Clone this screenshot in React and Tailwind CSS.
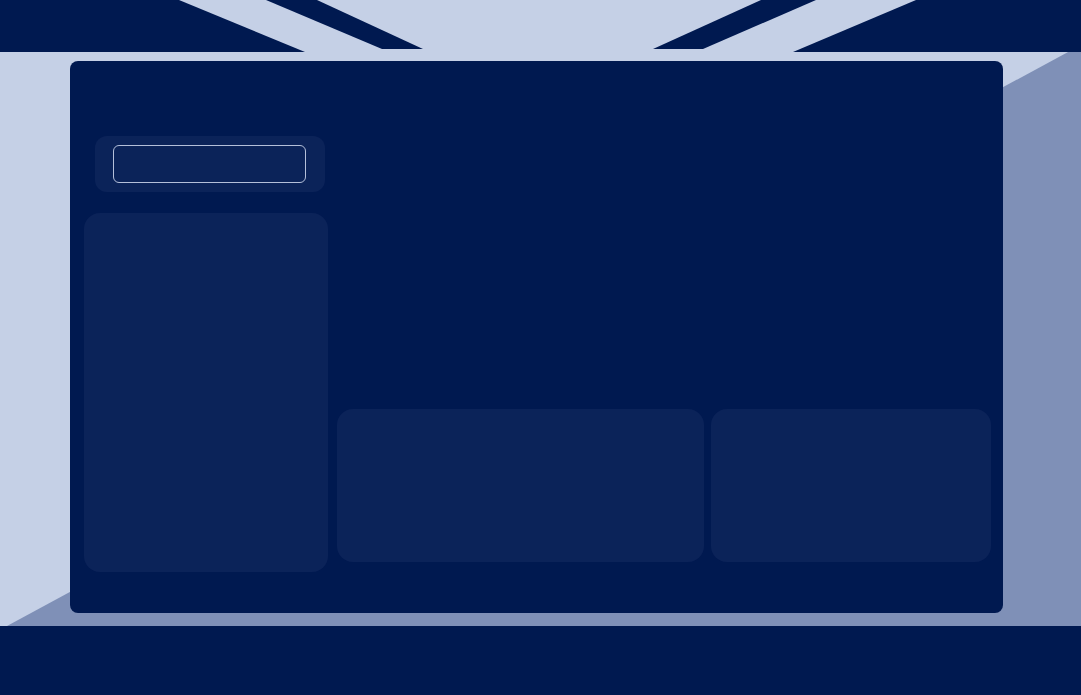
export default function App() {
    return (
        <div className="relative w-[1081px] h-[695px] overflow-hidden bg-[#c5d0e6]">
            {/* backdrop shapes */}
            <svg className="absolute inset-0" width="1081" height="695" viewBox="0 0 1081 695">
                <polygon points="1081,45 1081,626 7,626" fill="#7f90b7" />
                <polygon points="0,0 179,0 305,52 0,52" fill="#001950" />
                <polygon points="266,0 317,0 423,49 382,49" fill="#001950" />
                <polygon points="761,0 816,0 703,49 653,49" fill="#001950" />
                <polygon points="916,0 1081,0 1081,52 793,52" fill="#001950" />
                <rect x="0" y="626" width="1081" height="69" fill="#001950" />
            </svg>

            <div className="relative pt-[61px] pl-[70px]">
                <div className="w-[933px] h-[552px] rounded-lg bg-[#001950] flex pl-[14px] pr-[12px]">
                    {/* sidebar */}
                    <div className="w-[244px] flex flex-col pt-[75px]">
                        <div className="ml-[11px] w-[230px] h-[56px] rounded-xl bg-[#0b2359] flex items-center pl-[18px]">
                            <div className="w-[193px] h-[38px] rounded-md border border-[#b4c0da] bg-[#0b2359]" />
                        </div>
                        <div className="mt-[21px] h-[359px] rounded-2xl bg-[#0b2359]" />
                    </div>

                    {/* main */}
                    <div className="flex-1 flex flex-col justify-end pb-[51px] pl-[9px]">
                        <div className="flex gap-[7px] h-[153px]">
                            <div className="w-[367px] rounded-2xl bg-[#0b2359]" />
                            <div className="flex-1 rounded-2xl bg-[#0b2359]" />
                        </div>
                    </div>
                </div>
            </div>
        </div>
    );
}
